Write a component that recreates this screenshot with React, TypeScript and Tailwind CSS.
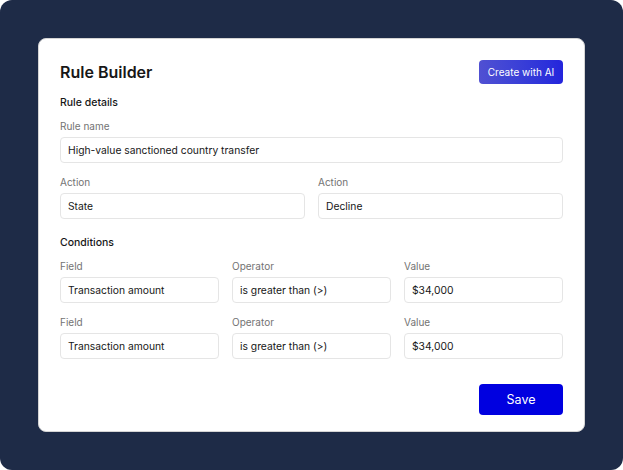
const font = { fontFamily: "Inter, 'Noto Sans', sans-serif" };

function Field({ label, value }: { label: string; value: string }) {
  return (
    <div className="flex flex-col">
      <span className="text-[10px] leading-[16px] text-neutral-500">{label}</span>
      <div className="mt-[3px] flex h-[26px] items-center rounded border border-neutral-200 px-[7px] pt-px text-[10.3px] text-neutral-900">
        {value}
      </div>
    </div>
  );
}

export default function App() {
  const conditions = [0, 1];

  return (
    <div
      className="flex h-[470px] w-[623px] items-start rounded-xl bg-[#1e2b47] p-[38px]"
      style={font}
    >
      <section className="flex w-[547px] flex-col rounded-lg border border-neutral-300 bg-white px-[21px] pb-4 pt-[21px]">
        <div className="flex items-center justify-between">
          <h1 className="text-[16px] font-semibold leading-6 text-neutral-900">Rule Builder</h1>
          <button className="h-6 w-[84px] rounded bg-gradient-to-r from-[#5050d2] to-[#2424dc] text-[10px] text-white">
            Create with AI
          </button>
        </div>

        {/* Details */}
        <h2 className="mt-[11px] text-[10.5px] font-medium leading-4 text-neutral-900">Rule details</h2>
        <div className="mt-[7px]">
          <Field label="Rule name" value="High-value sanctioned country transfer" />
        </div>
        <div className="mt-[11px] grid grid-cols-2 gap-[13px]">
          <Field label="Action" value="State" />
          <Field label="Action" value="Decline" />
        </div>

        {/* Conditions */}
        <h2 className="mt-4 text-[10.5px] font-medium leading-4 text-neutral-900">Conditions</h2>
        <div className="mt-[7px] flex flex-col gap-[11px]">
          {conditions.map((c) => (
            <div key={c} className="grid grid-cols-3 gap-[13px]">
              <Field label="Field" value="Transaction amount" />
              <Field label="Operator" value="is greater than (>)" />
              <Field label="Value" value="$34,000" />
            </div>
          ))}
        </div>

        <div className="mt-[25px] flex justify-end">
          <button className="h-[31px] w-[84px] rounded bg-[#0000e0] pt-px text-[12.5px] text-white">Save</button>
        </div>
      </section>
    </div>
  );
}
